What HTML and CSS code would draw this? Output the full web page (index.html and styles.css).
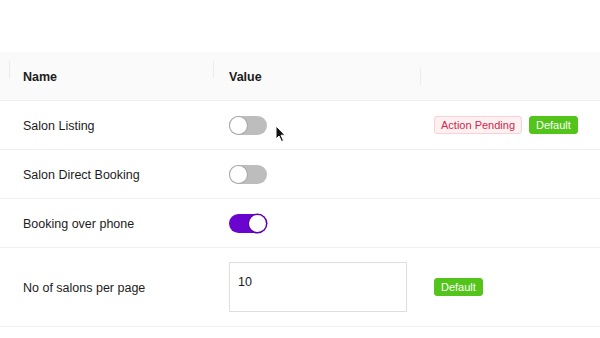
FILE: index.html
```html
<!DOCTYPE html>
<html lang="en">
<head>
    <meta charset="UTF-8">
    <meta name="viewport" content="width=device-width, initial-scale=1.0">
    <title>Settings</title>
    <link rel="stylesheet" href="styles.css">
</head>
<body>

    <div class="table">
        <!-- Header -->
        <div class="row head">
            <div class="cell c0"></div>
            <div class="cell c1">Name</div>
            <div class="cell c2">Value</div>
            <div class="cell c3"></div>
        </div>

        <div class="row">
            <div class="cell c0"></div>
            <div class="cell c1">Salon Listing</div>
            <div class="cell c2">
                <span class="switch"><span class="knob"></span></span>
            </div>
            <div class="cell c3">
                <span class="tag pending">Action Pending</span>
                <span class="tag ok">Default</span>
            </div>
        </div>

        <div class="row">
            <div class="cell c0"></div>
            <div class="cell c1">Salon Direct Booking</div>
            <div class="cell c2">
                <span class="switch"><span class="knob"></span></span>
            </div>
            <div class="cell c3"></div>
        </div>

        <div class="row">
            <div class="cell c0"></div>
            <div class="cell c1">Booking over phone</div>
            <div class="cell c2">
                <span class="switch on"><span class="knob"></span></span>
            </div>
            <div class="cell c3"></div>
        </div>

        <div class="row tall">
            <div class="cell c0"></div>
            <div class="cell c1">No of salons per page</div>
            <div class="cell c2">
                <div class="box">10</div>
            </div>
            <div class="cell c3">
                <span class="tag ok">Default</span>
            </div>
        </div>
    </div>

    <!-- mouse pointer -->
    <svg class="pointer" width="12" height="18" viewBox="0 0 12 18">
        <path d="M1 1 L1 14 L4 11 L6.5 16.5 L8.5 15.6 L6 10.2 L10 10.2 Z" fill="#111" stroke="#fff" stroke-width="1"/>
    </svg>

</body>
</html>
```

FILE: styles.css
```css
* {
    box-sizing: border-box;
}

body {
    margin: 0;
    background: #fff;
    font-family: 'Liberation Sans', Arial, sans-serif;
    font-size: 12.5px;
    color: #1c1c1c;
    position: relative;
    height: 338px;
    overflow: hidden;
}

.table {
    margin-top: 52px;
}

.row {
    display: grid;
    grid-template-columns: 10px 204px 207px 1fr;
    align-items: center;
    min-height: 49px;
    border-bottom: 1px solid #efefef;
}

.row.head {
    background: #fafafa;
    font-weight: bold;
    min-height: 49px;
    padding-top: 2px;
}

.row.tall {
    min-height: 79px;
}

.cell {
    position: relative;
    display: flex;
    align-items: center;
}

.c1 {
    padding-left: 13px;
}

.c2 {
    padding-left: 15px;
}

.c3 {
    padding-left: 13px;
    gap: 7px;
}

.row:not(.head) .c1 {
    padding-top: 1px;
}

.head .c1::before,
.head .c2::before,
.head .c3::before {
    content: "";
    position: absolute;
    left: -1px;
    top: -9px;
    width: 1px;
    height: 17px;
    background: #ebebeb;
}

.switch {
    display: inline-block;
    position: relative;
    width: 38px;
    height: 19px;
    border-radius: 10px;
    background: #bdbdbd;
}

.switch .knob {
    position: absolute;
    top: 1px;
    left: 1px;
    width: 17px;
    height: 17px;
    border-radius: 50%;
    background: #fff;
    box-shadow: 0 0 0 1px #a8a8a8;
}

.switch.on {
    background: #6a05cf;
}

.switch.on .knob {
    left: 20px;
    box-shadow: 0 0 0 1.5px #5a03b0;
}

.tag {
    display: inline-block;
    height: 18px;
    line-height: 16px;
    padding: 0 6px;
    font-size: 11px;
    border-radius: 3px;
    border: 1px solid transparent;
}

.tag.pending {
    color: #d0294a;
    background: #fff0f2;
    border-color: #fbd0d7;
}

.tag.ok {
    color: #fff;
    background: #52c41a;
    border-color: #52c41a;
}

.box {
    width: 178px;
    height: 50px;
    border: 1px solid #dedede;
    padding: 12px 8px;
    line-height: 14px;
    color: #1a1a1a;
}

.pointer {
    position: absolute;
    left: 275px;
    top: 125px;
}
```
